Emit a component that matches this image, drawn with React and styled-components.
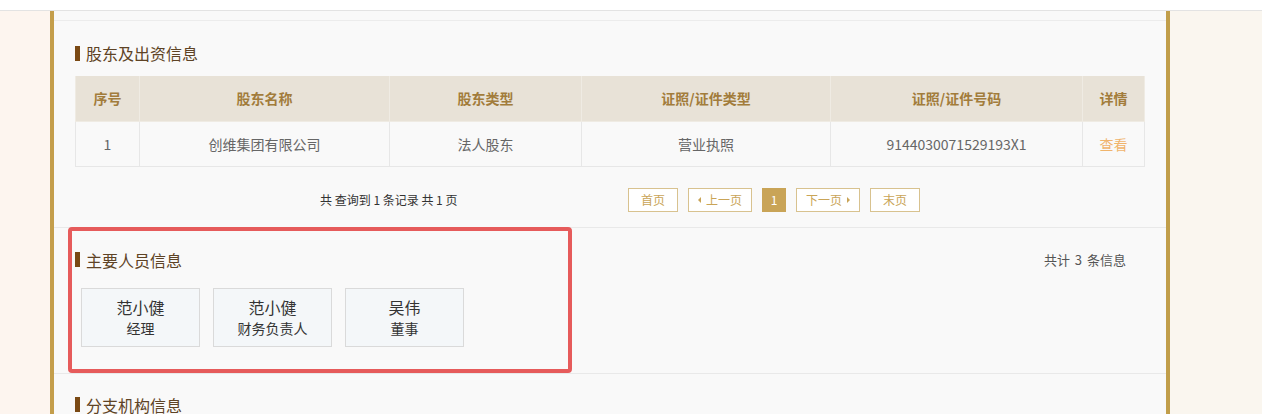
import React from "react";
import styled, { createGlobalStyle } from "styled-components";

const GlobalStyle = createGlobalStyle`
  * { box-sizing: border-box; }
  body {
    margin: 0;
    background: #fbf6f0;
    font-family: "Microsoft YaHei", "Noto Sans CJK SC", "Noto Sans", sans-serif;
    color: #333333;
  }
`;

const shareholders = [
  { no: 1, name: "创维集团有限公司", type: "法人股东", certType: "营业执照", certNo: "9144030071529193X1" },
];

const people = [
  { name: "范小健", role: "经理" },
  { name: "范小健", role: "财务负责人" },
  { name: "吴伟", role: "董事" },
];

export default function App() {
  return (
    <>
      <GlobalStyle />
      <TopBar />
      <Page>
        <Panel>
          <TopStrip />
          <Section $pad="22px 19px 15px 21px">
            <Title>股东及出资信息</Title>
            <Table>
              <colgroup>
                <col style={{ width: 64 }} />
                <col style={{ width: 250 }} />
                <col style={{ width: 192 }} />
                <col style={{ width: 249 }} />
                <col style={{ width: 252 }} />
                <col style={{ width: 62 }} />
              </colgroup>
              <thead>
                <tr>
                  <th>序号</th>
                  <th>股东名称</th>
                  <th>股东类型</th>
                  <th>证照/证件类型</th>
                  <th>证照/证件号码</th>
                  <th>详情</th>
                </tr>
              </thead>
              <tbody>
                {shareholders.map((s) => (
                  <tr key={s.no}>
                    <td>{s.no}</td>
                    <td>{s.name}</td>
                    <td>{s.type}</td>
                    <td>{s.certType}</td>
                    <td>{s.certNo}</td>
                    <td><Link>查看</Link></td>
                  </tr>
                ))}
              </tbody>
            </Table>
            <PagerRow>
              <Summary>共 查询到 1 条记录 共 1 页</Summary>
              <Pager>
                <PageBtn $w={50}>首页</PageBtn>
                <PageBtn $w={64}><Arrow $dir="left" />上一页</PageBtn>
                <PageBtn $w={24} $active>1</PageBtn>
                <PageBtn $w={64}>下一页<Arrow $dir="right" /></PageBtn>
                <PageBtn $w={50}>末页</PageBtn>
              </Pager>
            </PagerRow>
          </Section>

          <Section $pad="22px 19px 26px 21px">
            <Highlight />
            <TitleRow>
              <Title>主要人员信息</Title>
              <Count>共计 3 条信息</Count>
            </TitleRow>
            <Cards>
              {people.map((p, i) => (
                <PersonCard key={i}>
                  <Name>{p.name}</Name>
                  <Role>{p.role}</Role>
                </PersonCard>
              ))}
            </Cards>
          </Section>

          <Section $pad="21px 19px 0 21px" $last>
            <Title>分支机构信息</Title>
          </Section>
        </Panel>
      </Page>
    </>
  );
}

const TopBar = styled.div`
  height: 11px;
  background: #ffffff;
  border-bottom: 1px solid #e3e3e3;
`;

const Page = styled.div`
  background: linear-gradient(to right, #fdf5ef 0, #fdf5ef 50%, #faf6ef 50%);
  padding-left: 50px;
`;

const Panel = styled.div`
  width: 1120px;
  background: #f9f9f9;
  border-left: 4px solid #c49e4b;
  border-right: 4px solid #c19e4a;
  height: 403px;
  overflow: hidden;
`;

const TopStrip = styled.div`
  height: 10px;
  border-bottom: 1px solid #ececec;
`;

const Section = styled.div`
  position: relative;
  padding: ${(p) => p.$pad};
  border-bottom: ${(p) => (p.$last ? "none" : "1px solid #e9e9e9")};
`;

const TitleRow = styled.div`
  display: flex;
  align-items: center;
  justify-content: space-between;
`;

const Title = styled.h3`
  margin: 0;
  display: flex;
  align-items: center;
  height: 20px;
  font-size: 16px;
  font-weight: 400;
  color: #5e4325;
  &::before {
    content: "";
    width: 5px;
    height: 15px;
    background: #7a4914;
    margin-right: 6px;
  }
`;

const Count = styled.span`
  font-size: 13px;
  color: #555555;
  margin-right: 21px;
  word-spacing: 2px;
`;

const Table = styled.table`
  margin-top: 13px;
  width: 1069px;
  border-collapse: collapse;
  table-layout: fixed;
  font-size: 14px;
  th {
    height: 45px;
    background: #e8e2d7;
    color: #a27c3b;
    font-weight: 700;
    border: 1px solid #efebe3;
    border-top: none;
  }
  td {
    height: 45px;
    text-align: center;
    color: #666666;
    background: #f9f9f9;
    border: 1px solid #e7e7e7;
  }
`;

const Link = styled.span`
  color: #f0b46c;
  cursor: pointer;
`;

const PagerRow = styled.div`
  display: flex;
  align-items: center;
  margin-top: 21px;
`;

const Summary = styled.span`
  font-size: 12px;
  color: #333333;
  margin-left: 245px;
  width: 308px;
`;

const Pager = styled.div`
  display: flex;
  gap: 10px;
`;

const PageBtn = styled.span`
  width: ${(p) => p.$w}px;
  height: 24px;
  display: inline-flex;
  align-items: center;
  justify-content: center;
  gap: 3px;
  font-size: 12px;
  border: 1px solid ${(p) => (p.$active ? "#c9a457" : "#d8c28f")};
  background: ${(p) => (p.$active ? "#c9a457" : "#ffffff")};
  color: ${(p) => (p.$active ? "#ffffff" : "#c9a457")};
`;

const Arrow = styled.i`
  width: 0;
  height: 0;
  border-top: 3px solid transparent;
  border-bottom: 3px solid transparent;
  ${(p) =>
    p.$dir === "left"
      ? "border-right: 3px solid #c9a457; margin-right: 2px;"
      : "border-left: 3px solid #c9a457; margin-left: 2px;"}
`;

const Cards = styled.div`
  display: flex;
  gap: 13px;
  margin-top: 18px;
  padding-left: 6px;
`;

const PersonCard = styled.div`
  width: 119px;
  height: 59px;
  background: #f4f7f9;
  border: 1px solid #dadada;
  display: flex;
  flex-direction: column;
  align-items: center;
  justify-content: center;
`;

const Name = styled.span`
  font-size: 16px;
  color: #333333;
  line-height: 22px;
`;

const Role = styled.span`
  font-size: 14px;
  color: #333333;
  line-height: 20px;
`;

const Highlight = styled.div`
  position: absolute;
  left: 14px;
  top: -1px;
  width: 504px;
  height: 146px;
  border: 4px solid #e65b5b;
  border-radius: 4px;
  pointer-events: none;
`;
